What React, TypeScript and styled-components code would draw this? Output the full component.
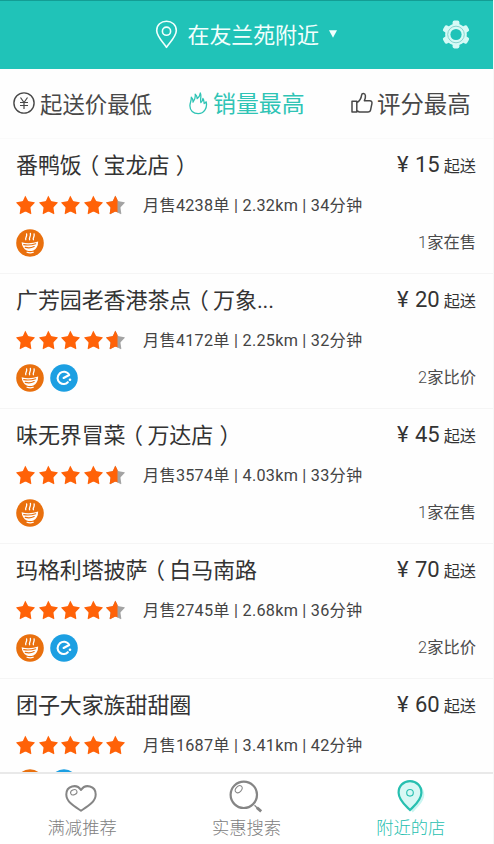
import React from "react";
import styled, { createGlobalStyle } from "styled-components";

const GlobalStyle = createGlobalStyle`
  * { box-sizing: border-box; }
  body { margin: 0; background: #fff; }
`;

const Screen = styled.div`
  width: 494px;
  height: 844px;
  display: flex;
  flex-direction: column;
  overflow: hidden;
  background: #fefefe;
  border-right: 1px solid #f7f7f7;
  color: #333;
  font-family: Roboto, "Noto Sans CJK SC", sans-serif;
  white-space: nowrap;
`;

const Header = styled.header`
  height: 69px;
  flex: none;
  display: grid;
  grid-template-columns: 155px 1fr 51px;
  align-items: center;
  background: #20c3b8;
  border-top: 1px solid #139d94;
  color: #f2fffd;
`;

const Location = styled.div`
  grid-column: 2;
  display: flex;
  align-items: center;
  font-size: 22px;
  line-height: 30px;
  padding-bottom: 2px;
`;

const LocationName = styled.span`
  margin-left: 9.5px;
  padding-top: 3px;
  letter-spacing: -0.1px;
`;

const Caret = styled.svg`
  margin-left: 10px;
`;

const SortBar = styled.nav`
  height: 70px;
  flex: none;
  display: flex;
  align-items: center;
  border-bottom: 1px solid #fafafa;
`;

const SortTab = styled.div<{ $start: number; $size: number; $gap: number; $active?: boolean }>`
  display: flex;
  align-items: center;
  width: ${(p) => (p.$active ? 163 : 165)}px;
  padding-left: ${(p) => p.$start}px;
  gap: ${(p) => p.$gap}px;
  font-size: ${(p) => p.$size}px;
  line-height: 32px;
  color: ${(p) => (p.$active ? "#2fc4b5" : "#484848")};
  svg { flex: none; }
`;

const SortLabel = styled.span`
  padding-top: 2px;
`;

const List = styled.main`
  flex: none;
  height: 633px;
  overflow: hidden;
`;

const Shop = styled.article`
  height: 135.1px;
  padding: 10px 17px 0 16px;
  border-bottom: 1px solid #f5f5f5;
`;

const Line = styled.div<{ $height: number }>`
  height: ${(p) => p.$height}px;
  display: flex;
  align-items: center;
  justify-content: space-between;
`;

const Name = styled.h2`
  margin: 0;
  font-size: 22px;
  line-height: 32px;
  font-weight: 400;
  letter-spacing: -0.1px;
`;

const Paren = styled.span`
  display: inline-block;
  width: 21.9px;
  padding-left: 2px;
  text-align: center;
  font-feature-settings: "halt";
`;

const Price = styled.div`
  display: flex;
  align-items: baseline;
  font-size: 22px;
  line-height: 32px;
`;

const Yen = styled.span`
  width: 18px;
`;

const Unit = styled.span`
  margin-left: 4px;
  font-size: 16.2px;
`;

const Rating = styled.div`
  display: flex;
  width: 127px;
  gap: 3.5px;
  padding-bottom: 2px;
`;

const Meta = styled.div`
  flex: 1;
  font-size: 16.2px;
  letter-spacing: 0.26px;
  line-height: 24px;
  color: #444;
`;

const Sources = styled.div`
  display: flex;
  gap: 6px;
`;

const Offers = styled.div`
  font-size: 16.3px;
  line-height: 24px;
  color: #4b4b4b;
`;

const Count = styled.span`
  font-weight: 300;
`;

const BottomBar = styled.footer`
  height: 72px;
  flex: none;
  display: grid;
  grid-template-columns: repeat(3, 164.3px);
  border-top: 2px solid #e9e9e9;
  background: #fff;
`;

const NavItem = styled.div<{ $active?: boolean }>`
  display: flex;
  flex-direction: column;
  align-items: center;
  padding-top: 5px;
  font-size: 17.3px;
  line-height: 24px;
  font-weight: 300;
  color: ${(p) => (p.$active ? "#27bfb0" : "#808080")};
  svg { margin: 0 0 3px 0; }
`;

const starPath =
  "M9.5 .9 11.9 5.6q.3.6 1 .7l5.5.9q.7.3.2.9l-3.8 3.9q-.4.5-.3 1.1l.8 5.5q0 .8-.7.5l-4.5-2.3q-.6-.3-1.2 0l-4.5 2.3q-.7.3-.7-.5l.8-5.5q.1-.6-.3-1.1L.4 8.1q-.5-.6.2-.9l5.5-.9q.7-.1 1-.7L9.1.9q.2-.4.4 0z";

const Star = ({ partial }: { partial?: boolean }) => (
  <svg width="19" height="20" viewBox="0 0 19 20">
    <path d={starPath} fill={partial ? "#a3a3a3" : "#ff6208"} />
    {partial && (
      <svg width="11.5" height="20" viewBox="0 0 11.5 20">
        <path d={starPath} fill="#ff6208" />
      </svg>
    )}
  </svg>
);

const BowlIcon = () => (
  <svg width="28" height="28" viewBox="0 0 28 28" fill="none" stroke="#fff" strokeLinecap="round">
    <circle cx="14" cy="14" r="13.8" fill="#e9700e" stroke="none" />
    <path d="M9.8 10.7c-1-1.5 1.5-2.7.8-5.8M13.6 10.7c-1-1.6 1.5-3.1.8-6.4M17.4 10.7c-.9-1.5 1.4-2.7.7-5.8" strokeWidth="1.3" />
    <path d="M5.6 13.3q8.4 2.2 16.6-.9-.2 6.5-4.8 9.2-3.4 1-6.6 0-4.6-2.3-5.2-8.3z" fill="#fff" stroke="none" />
    <path d="M7.7 15.6q6.2 1 12-.9M9.2 18.4q4.8 1.2 9-.8" stroke="#e9700e" strokeWidth="1.1" />
    <path d="M11 23.3q3.2 1 6.3 0" strokeWidth="1.2" />
  </svg>
);

const ElemeIcon = () => (
  <svg width="28" height="28" viewBox="0 0 28 28" fill="none">
    <circle cx="14" cy="14" r="13.8" fill="#1c9fe2" />
    <path d="m13.6 14 5.6-3c-2.2-4-6.6-4-9.5-1.6-3 2.8-2.7 7 .1 9.2 2.7 2.1 6.1 1.6 8-.4" stroke="#fff" strokeWidth="2.1" strokeLinecap="round" strokeLinejoin="round" />
    <circle cx="20" cy="15.8" r="1.3" fill="#fff" />
  </svg>
);

const PinIcon = () => (
  <svg width="23" height="29" viewBox="0 0 23 29" fill="none" stroke="currentColor" strokeWidth="1.6">
    <path d="M11.5 27.3C8.6 22.7 1.7 16.6 1.7 10.5 1.7 5 6 1.2 11.5 1.2s9.8 3.8 9.8 9.3c0 6.1-6.9 12.2-9.8 16.8z" strokeLinejoin="round" />
    <circle cx="11.5" cy="11.2" r="4.1" />
  </svg>
);

const GearIcon = () => (
  <svg width="28" height="30" viewBox="0 0 28 30" fill="none">
    <g fill="#d6faf6">
      <circle cx="14" cy="14.5" r="10.8" />
      {[0, 60, 120].map((angle) => (
        <rect key={angle} x="10.6" y="0.6" width="6.8" height="27.8" rx="1.8" transform={`rotate(${angle} 14 14.5)`} />
      ))}
    </g>
    <circle cx="14" cy="14.5" r="8.3" stroke="#7fcfc8" strokeWidth=".9" />
    <circle cx="14" cy="14.5" r="5.6" fill="#20c3b8" />
  </svg>
);

const YenIcon = () => (
  <svg width="22" height="23" viewBox="0 0 22 23" fill="none" stroke="currentColor" strokeWidth="1.4">
    <circle cx="11" cy="11" r="10.1" />
    <path d="m7.5 5.5 3.5 5 3.5-5M7 10.5h8M7 13.5h8M11 10.5V17" strokeWidth="1.2" />
  </svg>
);

const FlameIcon = () => (
  <svg width="19" height="23" viewBox="0 0 19 23" fill="none" stroke="currentColor" strokeWidth="1.3" strokeLinejoin="round">
    <path d="M9.2 21.6C4.2 21.6.9 18.4.9 13.8.9 10.8 2.6 8.6 2.3 5.2c1.4 1.2 1.9 2.8 1.7 5C6 7.6 6.6 4.9 6.2 2.2c1.4 1 2 2.5 1.9 4.4C10 5.4 11 3.4 11.3 1c1.5 2.8-.4 5.7.6 9.6 1.2-1 1.9-2.3 2-4.1 1.2 1.2.9 3 1.3 5 .9-.3 1.5-.9 1.9-1.7 1.6 5.6-1.9 11.8-7.9 11.8z" />
  </svg>
);

const ThumbIcon = () => (
  <svg width="22" height="23" viewBox="0 0 22 23" fill="none" stroke="currentColor" strokeWidth="1.5" strokeLinejoin="round">
    <path d="M1 9.3h4.8V20H1zM5.8 10.5c3-1.5 4.4-4.3 4.8-7.4.2-2.2 3.4-2.4 3.8.4.3 2-.4 3.7-1 5.2h5.3c2 0 2.5 1.3 2.2 2.9l-1.3 6.3c-.3 1.5-1.3 2.1-2.7 2.1H8.3l-2.5-1.2" />
  </svg>
);

const HeartIcon = () => (
  <svg width="34" height="34" viewBox="0 0 34 34" fill="none" stroke="#858585">
    <path d="M16 31.7C10.8 28.3 1.3 23.3 1.3 15.4 1.3 6.9 11.6 4.3 16 11c4.4-6.7 14.7-4.1 14.7 4.4 0 7.9-9.5 12.9-14.7 16.3z" strokeWidth="2" strokeLinejoin="round" />
    <ellipse cx="8.8" cy="13.3" rx="3.3" ry="2.5" transform="rotate(-25 8.8 13.3)" strokeWidth="1" />
  </svg>
);

const SearchIcon = () => (
  <svg width="34" height="34" viewBox="0 0 34 34" fill="none" stroke="#858585">
    <circle cx="14.8" cy="15.8" r="13.2" strokeWidth="2.2" />
    <ellipse cx="9.7" cy="10.2" rx="4" ry="2.8" transform="rotate(-48 9.7 10.2)" strokeWidth="1" />
    <path d="m25.5 26.2 3 3" strokeWidth="1.3" />
    <path d="m27.9 28.6 4.3 3.8" strokeWidth="2.8" />
  </svg>
);

const ShopPinIcon = () => (
  <svg width="34" height="34" viewBox="0 0 34 34" fill="none">
    <path d="M18.8 33.5C15.1 29.2 8.3 22.8 8.3 15.8 8.3 8.8 12.9 4 18.8 4s11.5 4.8 11.5 11.8c0 7-7.8 13.4-11.5 17.7z" fill="#c9f5f1" />
    <path d="M16 31C12 27 4.6 21.4 4.6 13.7 4.6 6.9 9.4 2.2 16 2.2s11.4 4.7 11.4 11.5C27.4 21.4 20 27 16 31z" fill="#d9f8f5" stroke="#27bfb0" strokeWidth="2.2" />
    <circle cx="16" cy="13.8" r="3.3" stroke="#27bfb0" strokeWidth="1.1" />
  </svg>
);

interface ShopInfo {
  name: string;
  price: number;
  sales: number;
  distance: string;
  minutes: number;
  sources: number;
  full?: boolean;
}

const shops: ShopInfo[] = [
  { name: "番鸭饭（宝龙店）", price: 15, sales: 4238, distance: "2.32", minutes: 34, sources: 1 },
  { name: "广芳园老香港茶点（万象...", price: 20, sales: 4172, distance: "2.25", minutes: 32, sources: 2 },
  { name: "味无界冒菜（万达店）", price: 45, sales: 3574, distance: "4.03", minutes: 33, sources: 1 },
  { name: "玛格利塔披萨（白马南路", price: 70, sales: 2745, distance: "2.68", minutes: 36, sources: 2 },
  { name: "团子大家族甜甜圈", price: 60, sales: 1687, distance: "3.41", minutes: 42, sources: 2, full: true },
];

const ShopName = ({ text }: { text: string }) => (
  <Name>
    {text.split(/([（）])/).map((part, i) =>
      part === "（" || part === "）" ? <Paren key={i}>{part}</Paren> : part
    )}
  </Name>
);

const ShopRow = ({ shop }: { shop: ShopInfo }) => (
  <Shop>
    <Line $height={33}>
      <ShopName text={shop.name} />
      <Price>
        <Yen>¥</Yen>
        {shop.price}
        <Unit>起送</Unit>
      </Price>
    </Line>
    <Line $height={47}>
      <Rating>
        {[0, 1, 2, 3, 4].map((n) => (
          <Star key={n} partial={n === 4 && !shop.full} />
        ))}
      </Rating>
      <Meta>
        月售{shop.sales}单 | {shop.distance}km | {shop.minutes}分钟
      </Meta>
    </Line>
    <Line $height={27}>
      <Sources>
        <BowlIcon />
        {shop.sources > 1 && <ElemeIcon />}
      </Sources>
      <Offers>
        <Count>{shop.sources}</Count>
        {shop.sources > 1 ? "家比价" : "家在售"}
      </Offers>
    </Line>
  </Shop>
);

export default function App() {
  return (
    <Screen>
      <GlobalStyle />
      <Header>
        <Location>
          <PinIcon />
          <LocationName>在友兰苑附近</LocationName>
          <Caret width="8" height="8" viewBox="0 0 8 8">
            <path d="M0 .3h8L4 7.8z" fill="currentColor" />
          </Caret>
        </Location>
        <GearIcon />
      </Header>
      <SortBar>
        <SortTab $start={13} $size={22.4} $gap={5}>
          <YenIcon />
          <SortLabel>起送价最低</SortLabel>
        </SortTab>
        <SortTab $start={24} $size={22.9} $gap={5} $active>
          <FlameIcon />
          <SortLabel>销量最高</SortLabel>
        </SortTab>
        <SortTab $start={23} $size={23.4} $gap={4}>
          <ThumbIcon />
          <SortLabel>评分最高</SortLabel>
        </SortTab>
      </SortBar>
      <List>
        {shops.map((shop) => (
          <ShopRow key={shop.name} shop={shop} />
        ))}
      </List>
      <BottomBar>
        <NavItem>
          <HeartIcon />
          满减推荐
        </NavItem>
        <NavItem>
          <SearchIcon />
          实惠搜索
        </NavItem>
        <NavItem $active>
          <ShopPinIcon />
          附近的店
        </NavItem>
      </BottomBar>
    </Screen>
  );
}
